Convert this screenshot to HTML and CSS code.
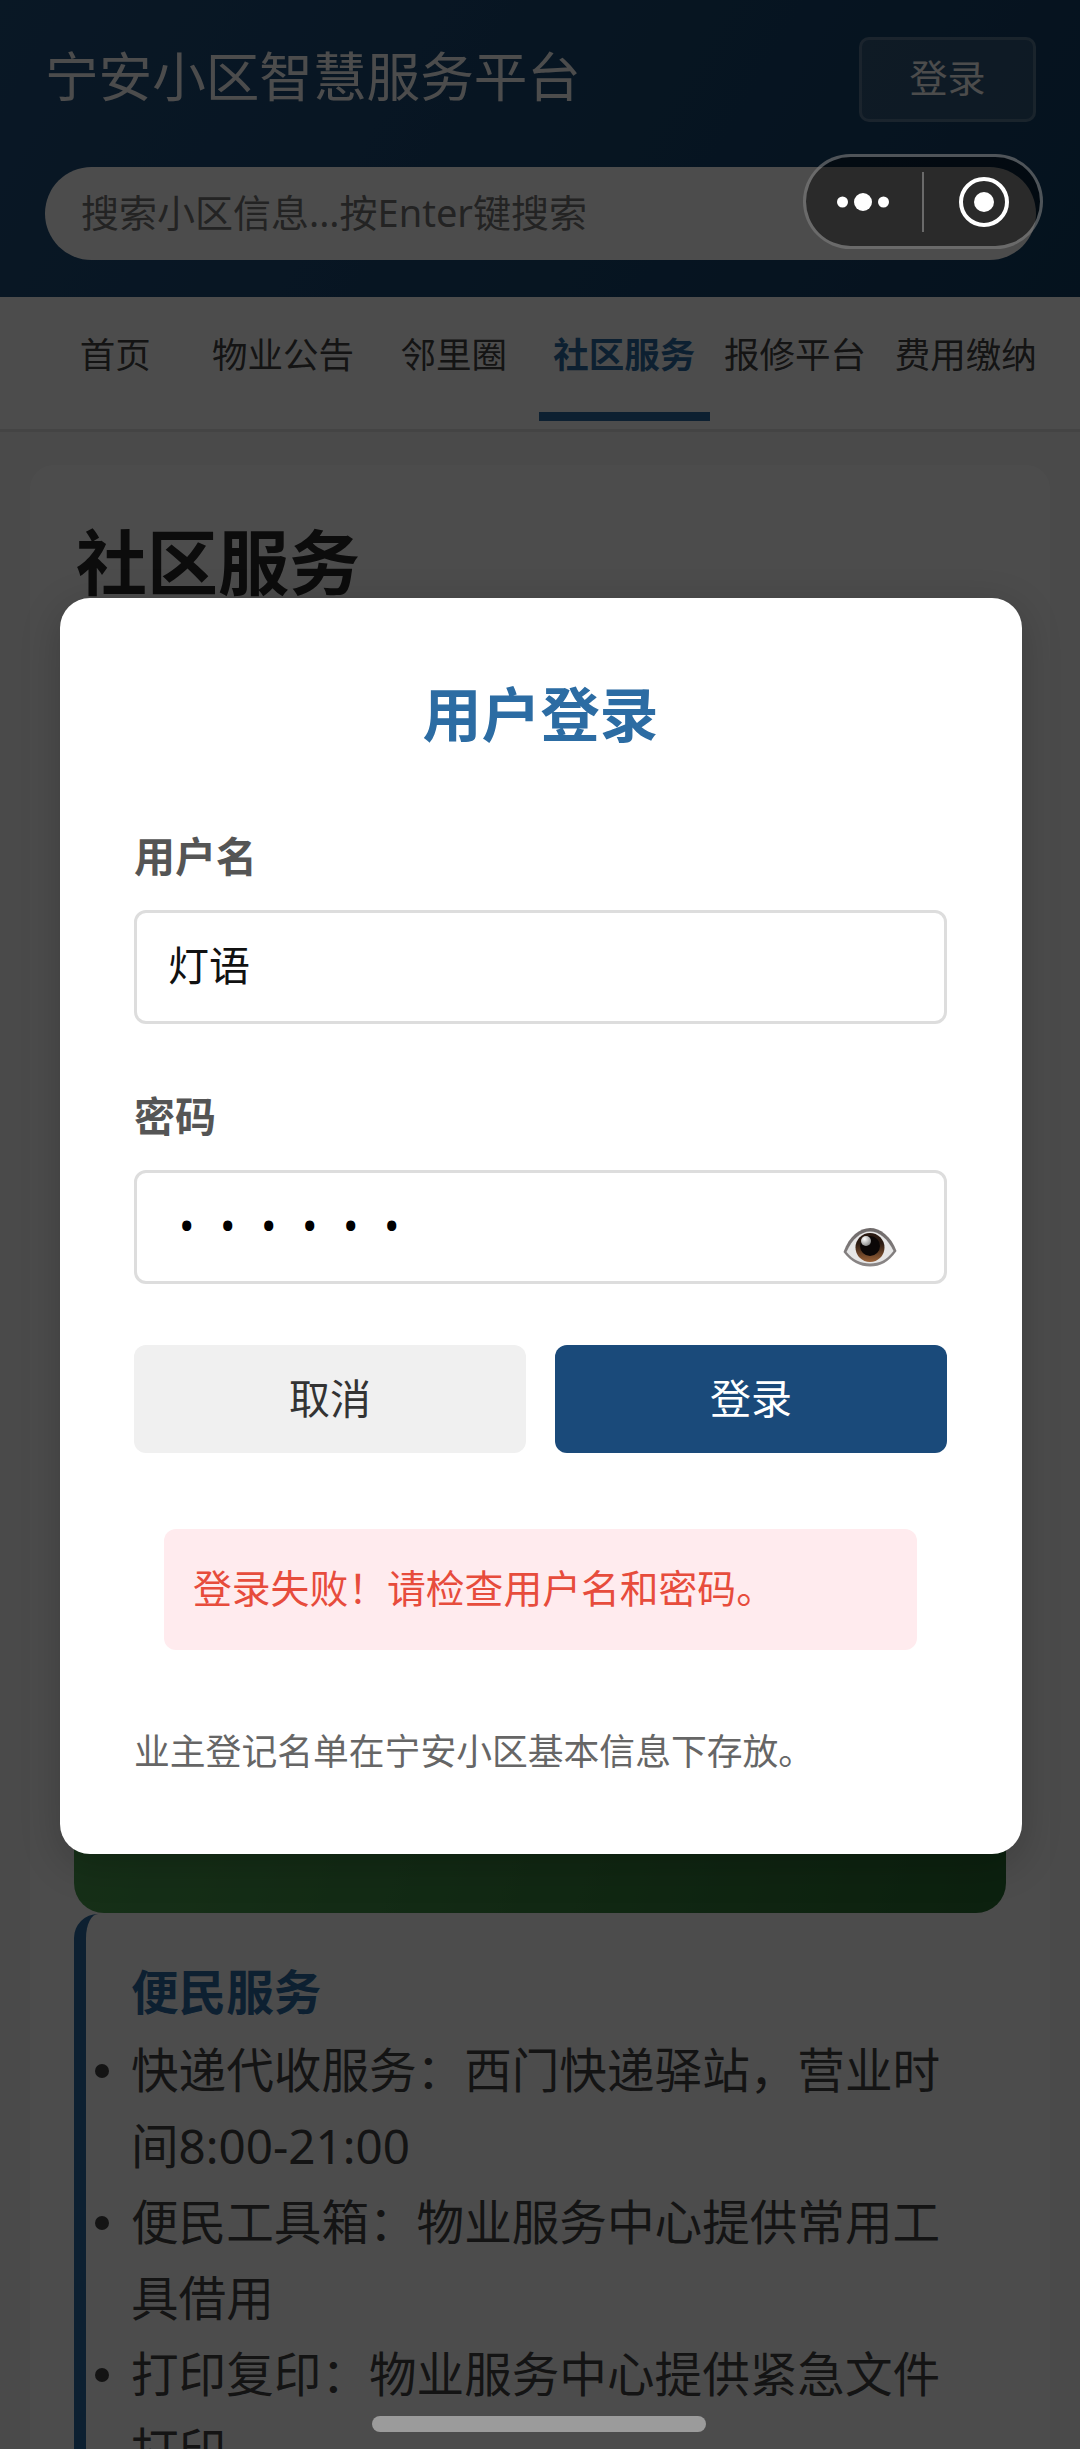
FILE: index.html
```html
<!DOCTYPE html>
<html lang="zh-CN">
<head>
<meta charset="utf-8">
<title>宁安小区智慧服务平台</title>
<link rel="stylesheet" href="styles.css">
</head>
<body>
<div class="app">
  <header class="header">
    <div class="header-top">
      <h1 class="brand">宁安小区智慧服务平台</h1>
      <button class="login-btn">登录</button>
    </div>
    <div class="search">搜索小区信息...按Enter键搜索</div>
  </header>
  <nav class="nav">
    <a class="nav-item">首页</a>
    <a class="nav-item">物业公告</a>
    <a class="nav-item">邻里圈</a>
    <a class="nav-item active">社区服务</a>
    <a class="nav-item">报修平台</a>
    <a class="nav-item">费用缴纳</a>
  </nav>
  <main class="main">
    <section class="panel">
      <h2 class="panel-title">社区服务</h2>
      <div class="green-card"></div>
      <div class="service">
        <h3 class="service-title">便民服务</h3>
        <ul class="service-list">
          <li>快递代收服务：西门快递驿站，营业时间8:00-21:00</li>
          <li>便民工具箱：物业服务中心提供常用工具借用</li>
          <li>打印复印：物业服务中心提供紧急文件打印</li>
        </ul>
      </div>
    </section>
  </main>

  <div class="overlay">
    <div class="modal">
      <h2 class="modal-title">用户登录</h2>
      <div class="field">
        <label class="field-label">用户名</label>
        <div class="input">灯语</div>
      </div>
      <div class="field field-last">
        <label class="field-label">密码</label>
        <div class="input input-pass">
          <span class="dots">••••••</span>
          <svg class="eye" viewBox="0 0 54 40" aria-hidden="true">
            <defs>
              <linearGradient id="lid" x1="0" y1="0" x2="0" y2="1">
                <stop offset="0" stop-color="#6f6a6a"/>
                <stop offset="1" stop-color="#8b8787"/>
              </linearGradient>
              <linearGradient id="iris" x1="0" y1="0" x2="0" y2="1">
                <stop offset="0.35" stop-color="#2a1a12"/>
                <stop offset="1" stop-color="#9a6238"/>
              </linearGradient>
              <radialGradient id="shine" cx="0.35" cy="0.3" r="0.7">
                <stop offset="0" stop-color="#ffffff"/>
                <stop offset="1" stop-color="#8d8d8d"/>
              </radialGradient>
            </defs>
            <path d="M0.5 25 C6 9 17 1 27 1 C37 1 48 9 53.500 24 C46 35 37 39.500 27 39.500 C17 39.500 8 35 0.500 25Z" fill="url(#lid)"/>
            <path d="M3.500 25 C9 12 18 4.500 27 4.500 C36 4.500 45 12 50.500 24 C44 33 36 36.500 27 36.500 C18 36.500 10 33 3.500 25Z" fill="#e6e6e6"/>
            <circle cx="27" cy="20.500" r="14.500" fill="url(#iris)"/>
            <circle cx="27" cy="19" r="10" fill="#0b0707"/>
            <circle cx="23" cy="14" r="5" fill="url(#shine)"/>
          </svg>
        </div>
      </div>
      <div class="actions">
        <button class="btn btn-cancel">取消</button>
        <button class="btn btn-primary">登录</button>
      </div>
      <div class="error">登录失败！请检查用户名和密码。</div>
      <p class="hint">业主登记名单在宁安小区基本信息下存放。</p>
    </div>
  </div>

  <div class="capsule">
    <svg class="capsule-dots" viewBox="0 0 52 20" aria-hidden="true">
      <circle cx="5.500" cy="10" r="5.500"/>
      <circle cx="26" cy="10" r="9"/>
      <circle cx="46.500" cy="10" r="5.500"/>
    </svg>
    <span class="capsule-line"></span>
    <svg class="capsule-ring" viewBox="0 0 50 50" aria-hidden="true">
      <circle cx="25" cy="25" r="23" fill="none" stroke="#fff" stroke-width="4"/>
      <circle cx="25" cy="25" r="10" fill="#fff"/>
    </svg>
  </div>
  <div class="home-bar"></div>
</div>
</body>
</html>
```
FILE: styles.css
```css
* { box-sizing: border-box; }
html, body { margin: 0; padding: 0; }
body {
  font-family: "Noto Sans", "Noto Sans CJK SC", sans-serif;
  background: #f7f7f7;
}
.app {
  position: relative;
  width: 1080px;
  height: 2449px;
  overflow: hidden;
  background: #f7f7f7;
}

/* header */
.header {
  height: 297px;
  padding: 37px 44px 0 45px;
  background: linear-gradient(120deg, #20507e 0%, #123f66 100%);
}
.header-top {
  display: flex;
  justify-content: space-between;
  align-items: center;
  height: 85px;
}
.brand {
  margin: 0;
  padding-bottom: 6px;
  font-size: 53.6px;
  line-height: 1;
  font-weight: 400;
  color: #fff;
}
.login-btn {
  width: 177px;
  height: 85px;
  padding: 0 0 8px;
  border: 3px solid rgba(255,255,255,.2);
  border-radius: 10px;
  background: rgba(255,255,255,.12);
  color: #fff;
  font: inherit;
  font-size: 38px;
}
.search {
  display: flex;
  align-items: center;
  height: 93px;
  margin-top: 45px;
  padding: 0 0 6px 36px;
  border-radius: 47px;
  background: #fff;
  color: #757575;
  font-size: 38px;
}

/* nav */
.nav {
  display: grid;
  grid-template-columns: repeat(6, 1fr);
  height: 135px;
  padding: 0 29px 0 27px;
  background: #fff;
  border-bottom: 3px solid #e4e4e4;
}
.nav-item {
  display: flex;
  justify-content: center;
  align-items: flex-start;
  padding-top: 31px;
  font-size: 35.5px;
  line-height: 52px;
  color: #444;
  white-space: nowrap;
}
.nav-item:first-child { padding-left: 6px; }
.nav-item.active {
  color: #2c6ca3;
  font-weight: 700;
  border-bottom: 9px solid #2c6ca3;
  margin-bottom: 8px;
}

/* page body */
.main { padding: 33px 30px 0; }
.panel {
  padding: 44px 44px 0;
  border-radius: 24px;
  background: #fff;
}
.panel-title {
  margin: 0 0 0 2px;
  font-size: 71px;
  line-height: 106px;
  font-weight: 700;
  color: #2a2a2a;
}
.green-card {
  height: 1298px;
  border-radius: 30px;
  background: linear-gradient(110deg, #5bb85f 0%, #2a6e32 100%);
}
.service {
  margin-top: 1px;
  padding: 43px 40px 0 45px;
  border-left: 12px solid #2c6ca3;
  border-radius: 24px 0 0 0;
  background: #fefefe;
}
.service-title {
  margin: 0 0 5px;
  font-size: 47.6px;
  line-height: 70px;
  font-weight: 700;
  color: #2c6ca3;
}
.service-list {
  margin: 0;
  padding: 0;
  list-style: none;
  font-size: 47.6px;
  line-height: 76px;
  color: #444;
}
.service-list li { position: relative; }
.service-list li::before {
  content: "";
  position: absolute;
  left: -36px;
  top: 32px;
  width: 14px;
  height: 14px;
  border-radius: 50%;
  background: currentColor;
}

/* dim + dialog */
.overlay {
  position: absolute;
  inset: 0;
  display: flex;
  justify-content: center;
  align-items: flex-start;
  padding-top: 598px;
  background: rgba(0,0,0,.7);
}
.modal {
  width: 962px;
  height: 1256px;
  margin-left: 2px;
  padding: 74px 75px 0 74px;
  border-radius: 30px;
  background: #fff;
  box-shadow: 0 10px 40px rgba(0,0,0,.2);
}
.modal-title {
  margin: 0 0 72px;
  text-align: center;
  font-size: 59px;
  line-height: 84px;
  font-weight: 700;
  color: #2c6ca3;
}
.field { margin-bottom: 64px; }
.field-last { margin-bottom: 61px; }
.field-label {
  display: block;
  margin-bottom: 26px;
  font-size: 41px;
  line-height: 56px;
  font-weight: 700;
  color: #555;
}
.input {
  display: flex;
  align-items: center;
  height: 114px;
  padding: 0 0 8px 31px;
  border: 3px solid #ddd;
  border-radius: 12px;
  font-size: 41px;
  color: #111;
}
.input-pass {
  position: relative;
  padding-bottom: 4px;
}
.dots {
  margin-left: 11px;
  letter-spacing: 25.6px;
  font-size: 41px;
  font-family: "Noto Sans", sans-serif;
  color: #000;
}
.eye {
  position: absolute;
  left: 706px;
  top: 54px;
  width: 54px;
  height: 40px;
}
.actions {
  display: flex;
  gap: 29px;
}
.btn {
  flex: 1;
  height: 108px;
  padding: 0 0 7px;
  border: 0;
  border-radius: 12px;
  font: inherit;
  font-size: 41px;
}
.btn-cancel { background: #f0f0f0; color: #333; }
.btn-primary { background: #1a4a7a; color: #fff; }
.error {
  display: flex;
  align-items: center;
  height: 121px;
  margin: 76px 30px 0;
  padding: 0 0 8px 29px;
  border-radius: 12px;
  background: #ffebee;
  color: #e74c3c;
  font-size: 38.8px;
}
.hint {
  margin: 76px 0 0;
  font-size: 35.8px;
  line-height: 50px;
  color: #666;
}

/* system overlays */
.capsule {
  position: absolute;
  left: 803px;
  top: 154px;
  width: 240px;
  height: 95px;
  border: 3px solid rgba(255,255,255,.3);
  border-radius: 48px;
  background: rgba(0,0,0,.44);
}
.capsule-dots {
  position: absolute;
  left: 31px;
  top: 35px;
  width: 52px;
  height: 20px;
  fill: #fff;
}
.capsule-line {
  position: absolute;
  left: 116px;
  top: 15px;
  width: 2px;
  height: 60px;
  background: #6a6a6a;
}
.capsule-ring {
  position: absolute;
  left: 153px;
  top: 20px;
  width: 50px;
  height: 50px;
}
.home-bar {
  position: absolute;
  left: 372px;
  top: 2416px;
  width: 334px;
  height: 16px;
  border-radius: 8px;
  background: #9b9b9b;
}
```
